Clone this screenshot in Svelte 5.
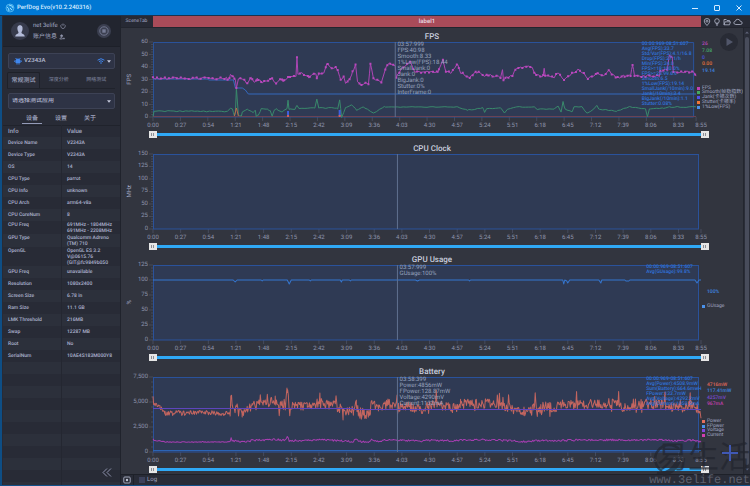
<script>
  const WIDTH = 547;
  const HEIGHT = 75;

  const info = [
    ['Device Name', 'V2343A'],
    ['Device Type', 'V2343A'],
    ['OS', '14'],
    ['CPU Type', 'parrot'],
    ['CPU Info', 'unknown'],
    ['CPU Arch', 'arm64-v8a'],
    ['CPU CoreNum', '8'],
    ['CPU Freq', '691MHz - 1804MHz\n691MHz - 2208MHz'],
    ['GPU Type', 'Qualcomm Adreno\n(TM) 710'],
    ['OpenGL', 'OpenGL ES 3.2\nV@0615.76\n(GIT@fc9849b050'],
    ['GPU Freq', 'unavailable'],
    ['Resolution', '1080x2400'],
    ['Screen Size', '6.78 in'],
    ['Ram Size', '11.1 GB'],
    ['LMK Threshold', '216MB'],
    ['Swap', '12287 MB'],
    ['Root', 'No'],
    ['SerialNum', '10AE4S183M000Y8']
  ];

  // Time labels: one every 27 seconds, plus the end of the recording
  const clock = (s) => Math.floor(s / 60) + ':' + String(s % 60).padStart(2, '0');
  const times = [...Array.from({ length: 20 }, (_, i) => i * 27), 535];

  // Repeatable jitter so that the traces look the same on every load
  function random(seed) {
    let s = seed;
    return () => {
      s = (s * 16807) % 2147483647;
      return s / 2147483647;
    };
  }

  function valueAt(keys, x) {
    for (let i = 1; i < keys.length; i++) {
      const [x0, y0] = keys[i - 1];
      const [x1, y1] = keys[i];
      if (x <= x1) return x1 === x0 ? y1 : y0 + ((y1 - y0) * (x - x0)) / (x1 - x0);
    }
    return keys[keys.length - 1][1];
  }

  function trace(keys, step, noise, seed, spike = 0) {
    const rnd = random(seed);
    const xs = new Set(keys.map((k) => k[0]));
    for (let x = 0; x <= WIDTH; x += step) xs.add(x);
    return [...xs]
      .sort((a, b) => a - b)
      .map((x) => {
        const n = typeof noise === 'function' ? noise(x) : noise;
        let y = valueAt(keys, x) + (rnd() - 0.5) * 2 * n;
        const r = rnd();
        if (spike && x > 78 && r > 0.94) y -= rnd() * spike;
        if (spike && x > 78 && r < 0.06) y += rnd() * spike * 0.7;
        return [x, y];
      });
  }

  const path = (pts) => pts.map(([x, y], i) => (i ? 'L' : 'M') + x.toFixed(1) + ' ' + y.toFixed(1)).join('');
  const marks = (pts) => pts.map(([x, y]) => `M${(x - 1).toFixed(1)} ${y.toFixed(1)}h2`).join('');

  const fps = trace([[0,36.5],[75,36.5],[77,37],[78,33],[81,34],[83,37],[84,45],[86,38],[90,37],[95,41],[99,36],[102,40],[105,37],[109,40],[114,40],[117,38],[119,36],[122,40],[124,41],[129,37],[131,40],[137,35],[144,35],[145,15],[146,33],[150,31],[154,33],[157,36],[164,31],[165,37],[167,31],[172,32],[175,21],[180,26],[185,26],[189,38],[192,35],[194,41],[197,38],[201,30],[204,22],[206,41],[209,43],[217,41],[219,22],[222,36],[230,41],[235,25],[239,21],[244,23],[245,35],[250,26],[259,20],[264,30],[287,30],[292,17],[295,30],[300,31],[307,22],[310,31],[319,35],[325,30],[330,31],[334,35],[337,33],[350,35],[352,27],[353,38],[355,35],[362,34],[365,27],[370,25],[380,25],[382,26],[385,32],[393,34],[394,27],[395,34],[404,35],[408,31],[414,37],[420,33],[428,28],[434,32],[438,37],[447,31],[452,34],[459,29],[467,36],[475,34],[481,34],[483,22],[485,34],[510,34],[511,29],[518,28],[520,13],[523,15],[524,29],[534,30],[543,29],[547,33]], 2, 1.2, 17);

  const smooth = trace([[0,75],[1,69],[75,69.5],[78,66],[80,67],[82,74],[83,70],[84,46],[86,73],[89,74],[90,70],[95,67],[101,71],[103,68],[104,74],[106,73],[109,67],[115,67],[118,69],[120,74],[122,68],[124,67],[130,70],[135,67],[136,58],[137,67],[143,67],[145,63],[147,66],[163,66],[165,57],[167,66],[185,66],[186,67],[188,58],[190,75],[194,66],[200,63],[205,68],[212,65],[222,71],[233,65],[307,65],[317,68],[332,66],[334,70],[336,67],[350,66],[354,71],[357,67],[365,65],[384,65],[387,67],[404,67],[408,64],[411,70],[413,60],[415,67],[422,70],[424,65],[432,65],[437,71],[444,67],[447,63],[449,67],[467,69],[480,65],[496,67],[498,75],[500,67],[514,66],[520,65],[547,65]], 3, (x) => (x > 233 && x < 307 ? 0.3 : 0.5), 5);

  const powerKeys = [[0,22],[1,27],[7,31],[12,36],[77,36],[78,17],[79,31],[84,30],[89,36],[94,33],[99,28],[110,26],[122,22],[127,27],[132,26],[134,10],[136,29],[144,29],[154,27],[167,25],[180,27],[190,32],[200,33],[203,22],[205,33],[212,36],[217,34],[218,25],[225,32],[235,25],[244,29],[257,28],[267,33],[274,26],[304,30],[307,26],[320,25],[340,26],[354,29],[365,33],[377,34],[380,29],[407,29],[424,26],[447,26],[464,25],[470,31],[480,26],[507,26],[527,31],[540,25],[547,36]];
  const power = trace(powerKeys.map(([x, y]) => [x, x > 79 ? y + 1 : y]), 0.7, (x) => (x < 77 ? 2.6 : 5), 29, 11);
  const current = trace(powerKeys.map(([x, y]) => [x, 65 + (y - 36) * 0.2]), 1, (x) => (x < 77 ? 0.4 : 0.9), 41);

  const flat = [[0,15],[80,15],[82,17],[84,15],[108,15],[109,16],[110,15],[134,15],[136,19],[138,15],[156,15],[157,16],[158,15],[187,15],[188,17],[189,15],[196,15],[197,16],[198,15],[262,15],[264,16],[266,15],[315,15],[316,16],[317,15],[409,15],[410,19],[411,15],[413,16],[414,18],[416,15],[445,15],[447,18],[448,15],[471,15],[472,16],[475,16],[476,15],[541,15],[543,18],[545,15],[547,15]];

  const charts = [
    {
      title: 'FPS', unit: 'FPS', ticks: ['60', '50', '40', '30', '20', '10', '0'],
      tipHeight: 50,
      tip: ['03:57:999', 'FPS:40.98', 'Smooth:8.33', '1%Low(FPS):18.44', 'SmallJank:0', 'Jank:0', 'BigJank:0', 'Stutter:0%', 'InterFrame:0'],
      stats: ['00:00:969-08:51:607', 'Avg(FPS):33.7', 'Std/Var(FPS):4.1/16.8', 'Drop(FPS):27.1/h', 'Min(FPS):24.0', 'FPS>=18:100.0%', 'FPS>=25:99.6%', 'Smooth:6.5', '1%Low(FPS):19.14', 'SmallJank(/10min):9.0', 'Jank(/10min):3.4', 'BigJank(/10min):1.1', 'Stutter:0.08%'],
      valueTop: 0, valueHeight: 32, gap: 12, legendHeight: 23,
      values: [['26', '#b548b8'], ['7.08', '#45a86c'], ['0', '#4b55e0'], ['0.00', '#e8743a'], ['19.14', '#3f86e0']],
      legend: [['FPS', '#c040b5'], ['Smooth(帧稳指数)', '#43a95f'], ['Jank(卡顿次数)', '#5050e8'], ['Stutter(卡顿率)', '#f07535'], ['1%Low(FPS)', '#4a92ec']],
      lines: [
        { d: 'M0 74.5H547', color: '#6a4355', width: 1 },
        { d: path(smooth), color: '#398a6b', width: 1 },
        { d: 'M82 74L84 66L86 74', color: '#b96a4a', width: 1 },
        { d: 'M136 74V69M188 74V68', color: '#3e5fe0', width: 2 },
        { d: 'M136 75V73M188 75V73', color: '#d3605a', width: 2 },
        { d: 'M0 37H55L56 38H81L83 46H90Q93 47 96 52H547', color: '#3469bd', width: 1 },
        { d: path(fps), color: '#ae45b5', width: 1 },
        { d: marks(fps.filter((p, i) => i % 2 === 0)), color: '#b948bd', width: 2 }
      ]
    },
    {
      title: 'CPU Clock', unit: 'MHz', ticks: ['150', '125', '100', '75', '50', '25', '0'],
      tipHeight: 0, tip: [], stats: [], valueTop: 0, valueHeight: 0, gap: 0, legendHeight: 0, values: [], legend: [], lines: []
    },
    {
      title: 'GPU Usage', unit: '%', ticks: ['125', '100', '75', '50', '25', '0'],
      tipHeight: 11, tip: ['03:57:999', 'GUsage:100%'],
      stats: ['00:00:969-08:51:607', 'Avg(GUsage):99.8%'],
      valueTop: 25, valueHeight: 6, gap: 8, legendHeight: 5,
      values: [['100%', '#3f86e0']],
      legend: [['GUsage', '#4a92ec']],
      lines: [{ d: path(flat), color: '#3576cf', width: 1 }]
    },
    {
      title: 'Battery', unit: '', ticks: ['7,500', '5,000', '2,500', '0'],
      tipHeight: 28, tip: ['03:58:399', 'Power:4856mW', 'FPower:128.87mW', 'Voltage:4290mV', 'Current:1132mA'],
      stats: ['00:00:969-08:51:607', 'Avg(Power):4508.9mW', 'Sum(Battery):664.6mwH', 'FPower:133.7mW', 'Avg(Voltage):4292.2mV', 'Avg(Current):1050.5mA'],
      valueTop: 6, valueHeight: 25, gap: 12, legendHeight: 18,
      values: [['4716mW', '#e0685a'], ['117.41mW', '#3f86e0'], ['4257mV', '#7b4bd0'], ['967mA', '#c23fae']],
      legend: [['Power', '#e66f5c'], ['FPower', '#4a92ec'], ['Voltage', '#8248e0'], ['Current', '#d23fb0']],
      lines: [
        { d: path(power), color: '#c3655f', width: 1 },
        { d: 'M0 31.5H200L201 32.5H547', color: '#5e45bd', width: 1 },
        { d: path(current), color: '#a53eb0', width: 1 },
        { d: 'M0 73.5H547', color: '#2c64b4', width: 1 }
      ]
    }
  ];

  let panel = $state('常规测试');
  let page = $state('设备');
</script>

<div class="window">
  <header class="titlebar">
    <svg class="logo" viewBox="0 0 10 10"><circle cx="5" cy="5" r="4" fill="#1a8fe0" stroke="#5fc0f5" stroke-width=".7" /><path d="M2 4Q4 5 4 8M4 2L7 3L8 5M5 5L7 7" stroke="#8fdcff" stroke-width="1" fill="none" /></svg>
    <h1>PerfDog Evo(v10.2.240316)</h1>
    <button aria-label="Minimise"><svg viewBox="0 0 8 8"><path d="M1 4.500H7" /></svg></button>
    <button aria-label="Maximise"><svg viewBox="0 0 8 8"><rect x="1.500" y="1.500" width="5" height="5" rx=".5" /></svg></button>
    <button aria-label="Close"><svg viewBox="0 0 8 8"><path d="M1.500 1.500L6.500 6.500M6.500 1.500L1.500 6.500" /></svg></button>
  </header>

  <div class="body">
    <aside>
      <div class="account">
        <svg class="avatar" viewBox="0 0 18 18"><circle cx="9" cy="9" r="9" fill="#373b4c" /><path d="M9 3.200C6.500 3.200 6.200 5.500 6.500 7.500C6.800 9.300 7.700 9.800 7.500 11C6.500 12 4.500 12.200 4.200 14.500H13.800C13.500 12.200 11.500 12 10.500 11C10.300 9.800 11.200 9.300 11.500 7.500C11.800 5.500 11.500 3.200 9 3.200Z" fill="#b3bbd8" /></svg>
        <div class="who">
          <p>net 3elife <svg viewBox="0 0 6 6"><path d="M2 1.300A2.200 2.200 0 1 0 4 1.300M3 .5V2.800" /></svg></p>
          <p>账户信息 <svg viewBox="0 0 6 6"><circle cx="2.600" cy="1.800" r="1" fill="#9297ae" /><path d="M.8 5Q1 3.500 2.800 3.500L3.500 5ZM4 4.500H5.800M4.900 3.600V5.400" /></svg></p>
        </div>
        <button class="stop" aria-label="Stop"><svg viewBox="0 0 14 14"><circle cx="7" cy="7" r="7" fill="#3b3f50" /><circle cx="7" cy="7" r="4.200" fill="none" stroke="#757b94" stroke-width=".9" /><rect x="5.300" y="5.300" width="3.400" height="3.400" fill="#757b94" /></svg></button>
      </div>

      <div class="picker device">
        <select aria-label="Device"><option>V2343A</option></select>
        <svg class="robot" viewBox="0 0 8 8"><path d="M2.500 2.300L1.700 1M5.500 2.300L6.300 1M.8 3.500V5M7.200 3.500V5M3 6V7.500M5 6V7.500" stroke="#3f86ee" stroke-width="1" /><path d="M1.500 3.500Q2 1.500 4 1.500Q6 1.500 6.500 3.500V6H1.500Z" fill="#3f86ee" /></svg>
        <svg class="wifi" viewBox="0 0 8 6"><path d="M.6 2.200Q4 -.8 7.400 2.200M2 3.600Q4 1.900 6 3.600" fill="none" stroke="#3f86ee" stroke-width="1" /><circle cx="4" cy="5" r=".8" fill="#3f86ee" /></svg>
        <svg class="caret" viewBox="0 0 4 3"><path d="M0 .3H4L2 2.700Z" fill="#c4c8da" /></svg>
      </div>

      <nav class="panels">
        {#each ['常规测试', '深度分析', '网络测试'] as name}
          <button class:active={panel === name} onclick={() => (panel = name)}>{name}</button>
        {/each}
      </nav>

      <div class="picker app">
        <select aria-label="App"><option>请选择测试应用</option></select>
        <svg class="caret" viewBox="0 0 4 3"><path d="M0 .3H4L2 2.700Z" fill="#c4c8da" /></svg>
      </div>

      <nav class="pages">
        {#each ['设备', '设置', '关于'] as name}
          <button class:active={page === name} onclick={() => (page = name)}>{name}</button>
        {/each}
      </nav>

      <table>
        <thead><tr><th>Info</th><th>Value</th></tr></thead>
        <tbody>
          {#each info as [name, value]}
            <tr class:multi={value.includes('\n')}><td>{name}</td><td>{value}</td></tr>
          {/each}
        </tbody>
      </table>
      <div class="blank"></div>
      <button class="collapse" aria-label="Collapse"><svg viewBox="0 0 10 9"><path d="M5 .5L1 4.500L5 8.500M9 .5L5 4.500L9 8.500" fill="none" stroke="#8d92ad" stroke-width="1" /></svg></button>
    </aside>

    <main>
      <div class="scene">
        <span class="scene-name">SceneTab</span>
        <span class="scene-label">label1</span>
        <div class="tools">
          <button aria-label="Mark"><svg viewBox="0 0 8 8"><path d="M4 7.500Q1.200 4.800 1.200 3A2.800 2.500 0 0 1 6.800 3Q6.800 4.800 4 7.500Z" /><circle cx="4" cy="3.200" r="1" /></svg></button>
          <button aria-label="Note"><svg viewBox="0 0 8 8"><circle cx="4" cy="3" r="2.300" /><path d="M3.200 5.200V6.200H4.800V5.200M3.300 7.300H4.700" /></svg></button>
          <button aria-label="Open"><svg viewBox="0 0 8 8"><path d="M1 6.800V1.500H3.200L4 2.500H6.500V3.600M1 6.800L2.200 3.800H7.500L6.500 6.800Z" /></svg></button>
          <button aria-label="Upload" class="wide"><svg viewBox="0 0 10 8"><path d="M2.800 6.500Q.8 6.300 .8 4.800Q.9 3.500 2.300 3.300Q2.600 1.300 4.800 1.300Q6.800 1.300 7.200 3.200Q9.200 3.300 9.200 5Q9 6.500 7.500 6.500Z" /></svg></button>
        </div>
      </div>

      <div class="board">
        <div class="charts">
          {#each charts as c}
            <section class="chart">
              <h2>{c.title}</h2>
              <div class="row">
                <div class="unit"><span>{c.unit}</span></div>
                <div class="scale">
                  {#each c.ticks as t}<span>{t}</span>{/each}
                </div>
                <div class="plot">
                  <svg viewBox="0 0 {WIDTH} {HEIGHT}" preserveAspectRatio="none">
                    <rect width="545" height="75" fill="#2f3a54" />
                    {#each { length: (c.ticks.length - 1) * 5 + 1 } as _, i}
                      <path d="M{i % 5 ? -2 : -4} {(i * HEIGHT) / ((c.ticks.length - 1) * 5)}H0" stroke="#50586c" stroke-width=".6" />
                    {/each}
                    {#each times as t}
                      <path d="M{(t / 535) * WIDTH} 75v4" stroke="#4b5266" stroke-width=".8" />
                    {/each}
                    <path d="M.5 .5H544.500V75H.5Z" fill="none" stroke="#2a529b" />
                    {#each c.lines as l}
                      <path d={l.d} stroke={l.color} stroke-width={l.width} fill="none" stroke-linejoin="round" />
                    {/each}
                    <path d="M244 0V75" stroke="#60708f" />
                  </svg>
                  <div class="tip" style:height="{c.tipHeight}px">
                    {#each c.tip as line}<span>{line}</span>{/each}
                  </div>
                  <div class="stats">
                    {#each c.stats as line}<span>{line}</span>{/each}
                  </div>
                </div>
                <div class="side" style:padding-top="{c.valueTop}px" style:gap="{c.gap}px">
                  <div class="values" style:height="{c.valueHeight}px">
                    {#each c.values as [text, color]}<span style:color>{text}</span>{/each}
                  </div>
                  <ul style:height="{c.legendHeight}px">
                    {#each c.legend as [text, color]}<li><i style:background={color}></i>{text}</li>{/each}
                  </ul>
                </div>
              </div>
              <div class="times">
                {#each times as t}<span>{clock(t)}</span>{/each}
              </div>
              <div class="range">
                <input type="range" aria-label="{c.title} range start" value="0" />
                <input type="range" aria-label="{c.title} range end" value="100" />
              </div>
            </section>
          {/each}
        </div>
        <div class="scroll">
          <svg viewBox="0 0 4 3"><path d="M0 2.500L2 .5L4 2.500Z" fill="#5f6478" /></svg>
          <div class="thumb"></div>
          <svg viewBox="0 0 4 3"><path d="M0 .5L2 2.500L4 .5Z" fill="#5f6478" /></svg>
        </div>
        <button class="play" aria-label="Play"><svg viewBox="0 0 18 18"><path d="M6.500 5L13 9L6.500 13Z" fill="#51566a" /></svg></button>
        <button class="add" aria-label="Add"><svg viewBox="0 0 16 16"><path d="M8 0V16M0 8H16" stroke="#4058b4" stroke-width="2" /></svg></button>
      </div>

      <footer>
        <button aria-label="Snapshot"><svg viewBox="0 0 8 8"><rect x=".8" y="1" width="6.400" height="6" rx="1" fill="none" stroke="#a3a8bb" /><circle cx="4" cy="4" r="1.200" fill="#c0c5d6" /></svg></button>
        <label><input type="checkbox" /> Log</label>
      </footer>
    </main>
  </div>

  <div class="brand">
    <svg viewBox="0 0 40 36"><path d="M13 30A14 14 0 1 1 30 8M8 32Q20 34 27 22M14 34Q25 33 31 20" fill="none" stroke="#22252e" stroke-width="2.500" /></svg>
    <strong>易生活</strong>
    <span>www.3elife.net</span>
  </div>
</div>

<style>
  :global(body) {
    background: #282b36;
  }
  .window {
    position: relative;
    display: flex;
    flex-direction: column;
    box-sizing: border-box;
    min-height: 100vh;
    border-bottom: 1px solid #12518a;
    background: #282b36;
    color: #a1a7c2;
    font: 6px/6px Roboto, 'Noto Sans CJK SC', sans-serif;
    text-rendering: geometricPrecision;
    overflow: hidden;
  }
  h1, h2, p, ul {
    margin: 0;
    padding: 0;
    font-weight: 400;
  }
  button {
    display: flex;
    align-items: center;
    justify-content: center;
    padding: 0;
    border: 0;
    background: none;
    color: inherit;
    font: inherit;
    text-rendering: inherit;
  }
  svg {
    display: block;
  }
  .titlebar {
    display: flex;
    align-items: center;
    height: 15px;
    padding-left: 5px;
    background: #0078d4;
    color: #d7ecff;
  }
  .titlebar h1 {
    flex: 1;
    padding-left: 2px;
    font-size: 6px;
    font-weight: 500;
  }
  .logo {
    width: 10px;
    height: 10px;
  }
  .titlebar button {
    width: 22px;
    height: 15px;
  }
  .titlebar button svg {
    width: 8px;
    height: 8px;
    fill: none;
    stroke: #d4eaff;
    stroke-width: 1;
  }
  .body {
    flex: 1;
    display: flex;
    border-top: 1px solid #1c3350;
  }

  aside {
    position: relative;
    display: flex;
    flex-direction: column;
    box-sizing: border-box;
    flex: 0 0 121px;
    border-left: 2px solid #0e4e85;
    border-right: 1px solid #20232c;
    padding-left: 1px;
    font-weight: 500;
  }
  .account {
    display: flex;
    align-items: center;
    height: 30px;
    padding: 0 9px 0 8px;
    border-bottom: 1px solid #1d2029;
    background: #22252f;
    margin-bottom: 6px;
  }
  .avatar {
    width: 18px;
    height: 18px;
  }
  .who {
    flex: 1;
    display: flex;
    flex-direction: column;
    gap: 5px;
    padding-left: 4px;
  }
  .who p {
    display: flex;
    align-items: center;
    gap: 2px;
  }
  .who p svg {
    width: 6px;
    height: 6px;
    fill: none;
    stroke: #9297ae;
    stroke-width: .7;
  }
  .stop svg {
    width: 14px;
    height: 14px;
  }
  .picker {
    position: relative;
    margin: 0 5px;
  }
  .picker select {
    display: block;
    width: 100%;
    height: 16px;
    padding: 0 5px;
    appearance: none;
    border: 1px solid #3d4255;
    border-radius: 2px;
    background: #2e3345;
    color: #b4bad2;
    font: inherit;
    text-rendering: inherit;
  }
  .device select {
    padding-left: 15px;
  }
  .app select {
    padding-left: 3px;
  }
  .picker svg {
    position: absolute;
    pointer-events: none;
  }
  .robot {
    left: 6px;
    top: 4px;
    width: 8px;
    height: 8px;
  }
  .wifi {
    right: 10px;
    top: 5px;
    width: 8px;
    height: 6px;
  }
  .caret {
    right: 4px;
    top: 7px;
    width: 4px;
    height: 3px;
  }
  .panels {
    display: flex;
    height: 16px;
    margin: 3px 5px 4px 4px;
    border-bottom: 1px solid #20232c;
  }
  .panels button {
    flex: 1;
    color: #737990;
    font-size: 5px;
  }
  .panels button.active {
    flex: 0 0 33px;
    height: 16px;
    border: 1px solid #1e2129;
    border-bottom: 0;
    border-radius: 2px 2px 0 0;
    background: #2b2e3a;
    color: #a1a7c0;
    font-size: 6px;
  }
  .pages {
    display: flex;
    gap: 9px;
    padding: 6px 19px 1px;
  }
  .pages button {
    width: 20px;
    height: 9px;
    border-bottom: 1px solid transparent;
  }
  .pages button.active {
    border-color: #949bb8;
  }
  table {
    width: 100%;
    border-collapse: collapse;
    table-layout: fixed;
  }
  th, td {
    height: 12px;
    padding: 0 0 0 5px;
    text-align: left;
    font-weight: 500;
    white-space: pre;
  }
  td {
    color: #adb3cf;
    font-size: 5px;
  }
  th {
    height: 11px;
    border-top: 1px solid #20232c;
    background: #282b36;
  }
  th:first-child, td:first-child {
    width: 53px;
    border-right: 1px solid #242731;
  }
  tbody tr:nth-child(odd) {
    background: #2c303b;
  }
  .multi td {
    padding-top: 1px;
    vertical-align: top;
  }
  .blank {
    flex: 1;
    background:
      linear-gradient(90deg, transparent 58px, #242731 58px, #242731 59px, transparent 59px),
      repeating-linear-gradient(#2c303b 0 12px, #282b36 12px 24px);
  }
  .collapse {
    position: absolute;
    right: 8px;
    bottom: 8px;
  }
  .collapse svg {
    width: 10px;
    height: 9px;
  }

  main {
    flex: 1;
    min-width: 0;
    display: flex;
    flex-direction: column;
    background: #32353f;
  }
  .scene {
    display: flex;
    align-items: stretch;
    height: 11px;
    border-bottom: 1px solid #22252e;
    background: #272a35;
    line-height: 11px;
  }
  .scene-name {
    flex: 0 0 31px;
    text-align: center;
    font-size: 5px;
    margin-right: 1px;
  }
  .scene-label {
    flex: 1;
    background: #a94b59;
    color: #e8dce4;
    font-weight: 500;
    text-align: center;
  }
  .tools {
    display: flex;
    align-items: center;
    gap: 2px;
    flex: 0 0 49px;
    padding-left: 2px;
    box-sizing: border-box;
  }
  .tools svg {
    width: 8px;
    height: 8px;
    fill: none;
    stroke: #b4b9cb;
    stroke-width: .8;
  }
  .tools .wide svg {
    width: 10px;
  }
  .board {
    position: relative;
    flex: 1;
    display: flex;
  }
  .charts {
    flex: 1;
    min-width: 0;
    display: flex;
    flex-direction: column;
  }
  .chart {
    flex: 1;
  }
  h2 {
    height: 14px;
    padding-left: 5px;
    padding-right: 5px;
    color: #c9cede;
    font-size: 8px;
    font-weight: 500;
    line-height: 17px;
    text-align: center;
  }
  .row {
    display: flex;
    height: 75px;
  }
  .unit {
    display: flex;
    align-items: center;
    justify-content: center;
    flex: 0 0 12px;
    padding-left: 6px;
    box-sizing: border-box;
  }
  .unit span {
    writing-mode: vertical-rl;
    transform: rotate(180deg);
  }
  .scale {
    display: flex;
    flex-direction: column;
    justify-content: space-between;
    flex: 0 0 20px;
    box-sizing: border-box;
    height: 81px;
    margin-top: -3px;
    padding-right: 5px;
    color: #8d93aa;
    text-align: right;
    white-space: nowrap;
  }
  .scale span {
    align-self: flex-end;
  }
  .plot {
    position: relative;
    flex: 1;
    min-width: 0;
  }
  .plot svg {
    width: 100%;
    height: 75px;
    overflow: visible;
  }
  .tip, .stats {
    position: absolute;
    top: 0;
    display: flex;
    flex-direction: column;
    justify-content: space-between;
    white-space: nowrap;
  }
  .tip {
    left: 45%;
    color: #98a2bd;
  }
  .stats {
    left: 90%;
    color: #2f74dc;
    font-size: 5px;
    line-height: 5px;
    font-weight: 500;
  }
  .side {
    display: flex;
    flex-direction: column;
    flex: 0 0 42px;
    box-sizing: border-box;
    font-size: 5px;
    line-height: 5px;
    white-space: nowrap;
  }
  .values, ul {
    display: flex;
    flex-direction: column;
    justify-content: space-between;
  }
  .values {
    padding-left: 6px;
    font-weight: 500;
  }
  li {
    display: flex;
    align-items: center;
    gap: 2px;
    height: 4px;
    padding-left: 1px;
  }
  li i {
    width: 3px;
    height: 3px;
  }
  .times {
    display: grid;
    grid-template-columns: repeat(19, minmax(0, 27fr)) minmax(0, 22fr) 0;
    height: 14px;
    margin: 0 42px 0 32px;
    color: #8d93aa;
    line-height: 18px;
  }
  .times span {
    display: flex;
    justify-content: center;
    width: 0;
    white-space: nowrap;
  }
  .range {
    position: relative;
    height: 7px;
    margin: 0 34px 0 28px;
    background: linear-gradient(#2fa9f6, #2fa9f6) center / calc(100% - 8px) 3px no-repeat;
  }
  .range input {
    position: absolute;
    inset: 0;
    width: 100%;
    height: 7px;
    margin: 0;
    appearance: none;
    background: none;
    pointer-events: none;
  }
  .range input::-webkit-slider-thumb {
    appearance: none;
    width: 8px;
    height: 7px;
    border: 0;
    background:
      repeating-linear-gradient(90deg, #8b8e96 0 1px, #e6e6e6 1px 2px) center / 4px 3px no-repeat,
      #e6e6e6;
    pointer-events: auto;
  }
  .scroll {
    display: flex;
    flex-direction: column;
    align-items: center;
    gap: 3px;
    flex: 0 0 6px;
    padding: 3px 0;
    border-left: 1px solid #23262f;
    background: #2a2d38;
  }
  .scroll svg {
    width: 4px;
    height: 3px;
  }
  .thumb {
    flex: 1;
    width: 4px;
    border-radius: 2px;
    background: #484c5b;
  }
  .play {
    position: absolute;
    right: 12px;
    top: 5px;
    width: 18px;
    height: 18px;
    border-radius: 50%;
    background: #282b35;
  }
  .play svg {
    width: 18px;
    height: 18px;
  }
  .add {
    position: absolute;
    right: 12px;
    bottom: 13px;
    z-index: 2;
  }
  .add svg {
    width: 16px;
    height: 16px;
  }
  footer {
    display: flex;
    align-items: stretch;
    box-sizing: border-box;
    height: 11px;
    border-top: 1px solid #1e2129;
    background: #292c37;
  }
  footer button {
    width: 13px;
    border-right: 1px solid #1e2129;
  }
  footer button svg {
    width: 8px;
    height: 8px;
  }
  footer label {
    display: flex;
    align-items: center;
    gap: 2px;
    padding-left: 5px;
  }
  footer input {
    width: 6px;
    height: 6px;
    margin: 0;
    appearance: none;
    background: #3c415a;
  }
  .brand {
    position: absolute;
    right: 0;
    bottom: 0;
    display: flex;
    flex-direction: column;
    align-items: flex-end;
    color: #22252e;
    pointer-events: none;
    opacity: .7;
  }
  .brand svg {
    position: absolute;
    left: 0;
    top: 0;
    width: 40px;
    height: 36px;
  }
  .brand strong {
    font-size: 31px;
    line-height: 34px;
    font-weight: 400;
  }
  .brand span {
    color: #747886;
    font: 12px/10px 'Liberation Mono', monospace;
  }
</style>
